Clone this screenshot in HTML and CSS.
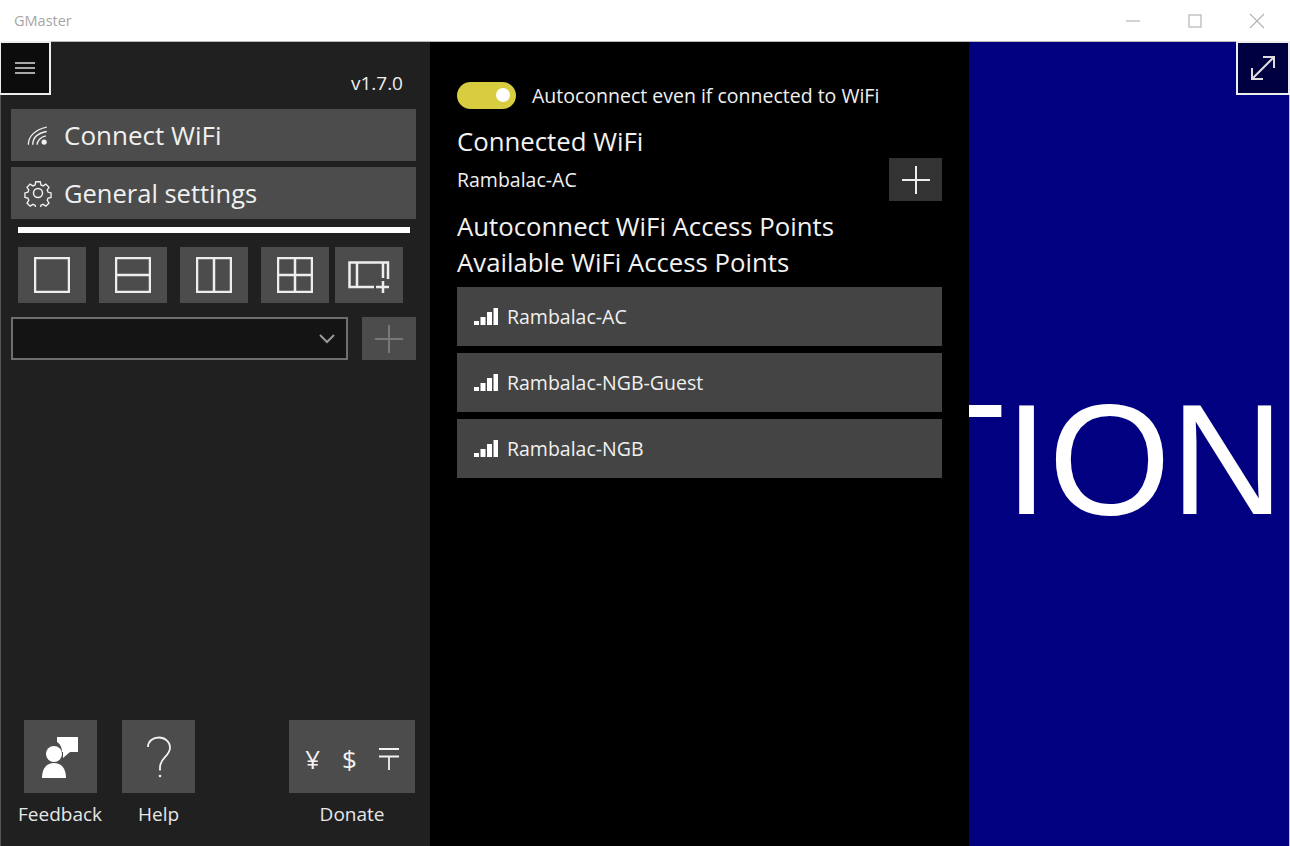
FILE: index.html
```html
<!DOCTYPE html>
<html>
<head>
  <title>GMaster</title>
  <link rel="stylesheet" href="styles.css">
</head>
<body>
  <div class="titlebar">
    <span class="app-title">GMaster</span>
    <div class="window-controls">
      <svg class="win-icon" viewBox="0 0 16 16"><path d="M1 8h14"/></svg>
      <svg class="win-icon" viewBox="0 0 16 16"><rect x="2" y="2" width="12" height="12"/></svg>
      <svg class="win-icon" viewBox="0 0 16 16"><path d="M1 1l14 14M15 1L1 15"/></svg>
    </div>
  </div>

  <div class="app">
    <div class="sidebar">
      <div class="version">v1.7.0</div>
      <div class="nav-btn">
        <svg class="nav-icon" viewBox="-3 -3 32 32">
          <path d="M2 24C2 15 9 7 23 4M7 24C7 17 12 11 23 9M12 24C12 20 16 15 22 14"/>
          <circle cx="20" cy="21" r="3" class="solid"/>
        </svg>
        <span>Connect WiFi</span>
      </div>
      <div class="nav-btn">
        <svg class="nav-icon" viewBox="0 0 28 28">
          <circle cx="14" cy="14" r="4.5"/>
          <path d="M11.5 1.5h5l.8 3.6 2.3 1 3.2-2 3.4 3.6-2 3 1 2.4 3.3.8v5l-3.3.8-1 2.3 2 3.2-3.5 3.4-3.1-2-2.3 1-.8 3.4h-5l-.8-3.4-2.3-1-3.1 2-3.5-3.4 2-3.2-1-2.3-3.3-.8v-5l3.3-.8 1-2.4-2-3 3.4-3.6 3.2 2 2.3-1z" transform="translate(1.4 1.4) scale(.9)"/>
        </svg>
        <span>General settings</span>
      </div>
      <div class="divider"></div>

      <div class="layout-row">
        <div class="tile"><svg viewBox="0 0 36 36"><rect x="1" y="1" width="34" height="34"/></svg></div>
        <div class="tile"><svg viewBox="0 0 36 36"><rect x="1" y="1" width="34" height="34"/><path d="M1 18h34"/></svg></div>
        <div class="tile"><svg viewBox="0 0 36 36"><rect x="1" y="1" width="34" height="34"/><path d="M18 1v34"/></svg></div>
        <div class="tile"><svg viewBox="0 0 36 36"><rect x="1" y="1" width="34" height="34"/><path d="M18 1v34M1 18h34"/></svg></div>
        <div class="tile tile-last"><svg viewBox="0 0 42 36"><path d="M26 26H1.500V1.500H40V18M9 1.500V26M35 1.500V17M35 20V32M28 26h13"/></svg></div>
      </div>

      <div class="combo-row">
        <div class="combo">
          <svg width="16" height="10" viewBox="0 0 16 10"><path d="M1 1l7 7 7-7"/></svg>
        </div>
        <div class="combo-add">
          <svg width="28" height="28" viewBox="0 0 28 28"><path d="M0 14h28M14 0v28"/></svg>
        </div>
      </div>

      <div class="bottom-row">
        <div class="bottom-item">
          <div class="square">
            <svg width="38" height="42" viewBox="0 0 38 42" class="filled">
              <path d="M16 1h21v15H29l-7 6v-6h-1c0-5-2-8-5-10z"/>
              <circle cx="13" cy="18" r="8"/>
              <path d="M1 42c0-10 5-15 12-15s12 5 12 15z"/>
            </svg>
          </div>
          <span>Feedback</span>
        </div>
        <div class="bottom-item">
          <div class="square">
            <svg width="26" height="42" viewBox="0 0 26 42"><path d="M2 11C2 5 7 1.500 13 1.500S24 6 24 11.500c0 9-10 10-10 20v3"/><circle cx="14" cy="40" r="1.300" class="solid"/></svg>
          </div>
          <span>Help</span>
        </div>
        <div class="bottom-item donate">
          <div class="square wide">
            <span>¥</span><span>$</span>
            <svg width="20" height="22" viewBox="0 0 20 22"><path d="M0 1h20M0 8.500h20M10 8.500V22"/></svg>
          </div>
          <span>Donate</span>
        </div>
      </div>
    </div>

    <div class="wifi-panel">
      <div class="toggle-row">
        <div class="toggle"><div class="knob"></div></div>
        <span>Autoconnect even if connected to WiFi</span>
      </div>
      <h2 class="connected-head">Connected WiFi</h2>
      <div class="connected-row">
        <span>Rambalac-AC</span>
        <div class="add-btn">
          <svg width="28" height="28" viewBox="0 0 28 28"><path d="M0 14h28M14 0v28"/></svg>
        </div>
      </div>
      <h2>Autoconnect WiFi Access Points</h2>
      <h2>Available WiFi Access Points</h2>
      <div class="ap-list">
        <div class="ap-item">
          <svg class="bars" viewBox="0 0 24 17"><path d="M0 13h5v4H0zM6.500 9h5v8h-5zM13 4h5v13h-5zM19.500 0H24v17h-4.500z"/></svg>
          <span>Rambalac-AC</span>
        </div>
        <div class="ap-item">
          <svg class="bars" viewBox="0 0 24 17"><path d="M0 13h5v4H0zM6.500 9h5v8h-5zM13 4h5v13h-5zM19.500 0H24v17h-4.500z"/></svg>
          <span>Rambalac-NGB-Guest</span>
        </div>
        <div class="ap-item">
          <svg class="bars" viewBox="0 0 24 17"><path d="M0 13h5v4H0zM6.500 9h5v8h-5zM13 4h5v13h-5zM19.500 0H24v17h-4.500z"/></svg>
          <span>Rambalac-NGB</span>
        </div>
      </div>
    </div>

    <div class="video-panel">
      <span class="video-text">TION</span>
    </div>

    <button class="corner-btn menu-btn">
      <svg width="20" height="12" viewBox="0 0 20 12"><path d="M0 1h20M0 6h20M0 11h20"/></svg>
    </button>
    <button class="corner-btn expand-btn">
      <svg width="28" height="28" viewBox="0 0 28 28"><path d="M3 25L25 3M14 3h11v11M3 14v11h11"/></svg>
    </button>
  </div>
</body>
</html>
```

FILE: styles.css
```css
html, body {
  margin: 0;
  height: 846px;
  overflow: hidden;
  background-color: #000;
  color: #fff;
  font-family: "Open Sans", "Noto Sans", sans-serif;
}

svg {
  display: block;
  fill: none;
  stroke: currentColor;
}

.solid {
  fill: currentColor;
  stroke: none;
}

/* window title bar */
.titlebar {
  height: 41px;
  box-sizing: border-box;
  background-color: #fff;
  display: flex;
  align-items: center;
  justify-content: space-between;
  padding-left: 14px;
}

.app-title {
  font-size: 14.500px;
  color: #a6a6a6;
}

.window-controls {
  display: flex;
  align-items: center;
  gap: 46px;
  padding-right: 25px;
  color: #b4b4b4;
}

.win-icon {
  width: 16px;
  height: 16px;
  stroke-width: 1.2;
}

/* main area */
.app {
  position: relative;
  display: flex;
  height: 805px;
  border-top: 1px solid #b8b8b8;
  box-sizing: border-box;
}

.corner-btn {
  position: absolute;
  top: -1px;
  height: 54px;
  padding: 0;
  box-sizing: border-box;
  display: flex;
  align-items: center;
  justify-content: center;
  color: #ddd;
  border: 2px solid #eee;
}

.menu-btn {
  left: -1px;
  width: 52px;
  background-color: #0c0c0c;
}

.expand-btn {
  right: 0;
  width: 54px;
  background-color: #000040;
}

.expand-btn svg {
  stroke-width: 2;
}

.menu-btn svg {
  stroke-width: 1.4;
}

/* left sidebar */
.sidebar {
  width: 430px;
  box-sizing: border-box;
  background-color: #202020;
  border-left: 1px solid #555;
  padding: 26px 14px 0 10px;
  display: flex;
  flex-direction: column;
}

.version {
  height: 41px;
  padding-right: 13px;
  text-align: right;
  font-size: 19px;
  line-height: 30px;
  color: #eee;
}

.nav-btn {
  height: 52px;
  margin-bottom: 6px;
  background-color: #4c4c4c;
  display: flex;
  align-items: center;
  gap: 12px;
  padding-left: 13px;
  font-size: 26px;
  color: #f0f0f0;
}

.nav-btn + .nav-btn {
  font-size: 25.500px;
}

.nav-icon {
  width: 28px;
  height: 28px;
  stroke-width: 1.5;
}

.divider {
  height: 6px;
  background-color: #fff;
  margin: 2px 6px 14px 7px;
}

.layout-row {
  display: flex;
  gap: 13px;
  padding-left: 7px;
  margin-bottom: 14px;
}

.tile {
  width: 68px;
  height: 56px;
  background-color: #4c4c4c;
  display: flex;
  align-items: center;
  justify-content: center;
  color: #eee;
}

.tile svg {
  width: 36px;
  height: 36px;
  stroke-width: 2.500;
}

.tile-last {
  margin-left: -7px;
}

.tile-last svg {
  width: 42px;
  margin-top: 8px;
}

.combo-row {
  display: flex;
  gap: 14px;
}

.combo {
  width: 337px;
  height: 43px;
  box-sizing: border-box;
  background-color: #141414;
  border: 2px solid #6f6f6f;
  display: flex;
  align-items: center;
  justify-content: flex-end;
  padding-right: 11px;
  color: #999;
}

.combo svg {
  stroke-width: 2;
}

.combo-add {
  width: 54px;
  height: 43px;
  background-color: #4c4c4c;
  display: flex;
  align-items: center;
  justify-content: center;
  color: #787878;
}

.combo-add svg {
  stroke-width: 2;
}

.bottom-row {
  margin-top: auto;
  display: flex;
  padding-left: 7px;
  margin-bottom: 18px;
  gap: 20px;
}

.bottom-item {
  display: flex;
  flex-direction: column;
  align-items: center;
  font-size: 19px;
  color: #e6e6e6;
  gap: 7px;
}

.bottom-item > span {
  line-height: 28px;
}

.square {
  width: 73px;
  height: 73px;
  background-color: #4c4c4c;
  display: flex;
  align-items: center;
  justify-content: center;
  color: #f2f2f2;
}

.filled {
  fill: #fff;
  stroke: none;
}

.bottom-item .square svg {
  stroke-width: 1.8;
}

.donate {
  margin-left: 74px;
}

.wide {
  width: 126px;
  gap: 22px;
  font-size: 26px;
  padding-top: 4px;
  box-sizing: border-box;
}

/* wifi panel */
.wifi-panel {
  width: 539px;
  box-sizing: border-box;
  padding: 39px 27px 0;
  background-color: #000;
}

.toggle-row {
  display: flex;
  align-items: center;
  gap: 16px;
  height: 28px;
  font-size: 19.500px;
  color: #f0f0f0;
}

.toggle-row span {
  padding-top: 1px;
}

.toggle {
  width: 59px;
  height: 27px;
  border-radius: 14px;
  background-color: #d8cc3f;
  display: flex;
  align-items: center;
  justify-content: flex-end;
  padding-right: 6px;
  box-sizing: border-box;
}

.knob {
  width: 14px;
  height: 14px;
  border-radius: 50%;
  background-color: #fff;
}

h2 {
  margin: 0;
  font-weight: 400;
  font-size: 25.750px;
  line-height: 36px;
  color: #f2f2f2;
}

.connected-head {
  margin-top: 14px;
}

.connected-row {
  height: 43px;
  margin-top: -1px;
  margin-bottom: 7px;
  display: flex;
  align-items: center;
  justify-content: space-between;
  font-size: 19.500px;
  color: #f0f0f0;
}

.add-btn {
  width: 53px;
  height: 43px;
  background-color: #333;
  display: flex;
  align-items: center;
  justify-content: center;
  color: #eee;
}

.add-btn svg {
  stroke-width: 2;
}

.ap-list {
  margin-top: 7px;
  display: flex;
  flex-direction: column;
  gap: 7px;
}

.ap-item {
  height: 59px;
  background-color: #444;
  display: flex;
  align-items: center;
  gap: 9px;
  padding-left: 17px;
  font-size: 19.500px;
  color: #f0f0f0;
}

.bars {
  width: 24px;
  height: 17px;
  fill: #fff;
  stroke: none;
}

/* video panel */
.video-panel {
  flex: 1;
  min-width: 0;
  overflow: hidden;
  background-color: #000080;
  border-right: 1px solid #c8c8c8;
  display: flex;
  align-items: center;
  justify-content: flex-end;
  padding-right: 5px;
}

.video-text {
  font-family: "Liberation Sans", Arial, sans-serif;
  font-size: 157px;
  line-height: 1;
  white-space: nowrap;
  flex-shrink: 0;
  margin-bottom: -30px;
}
```
